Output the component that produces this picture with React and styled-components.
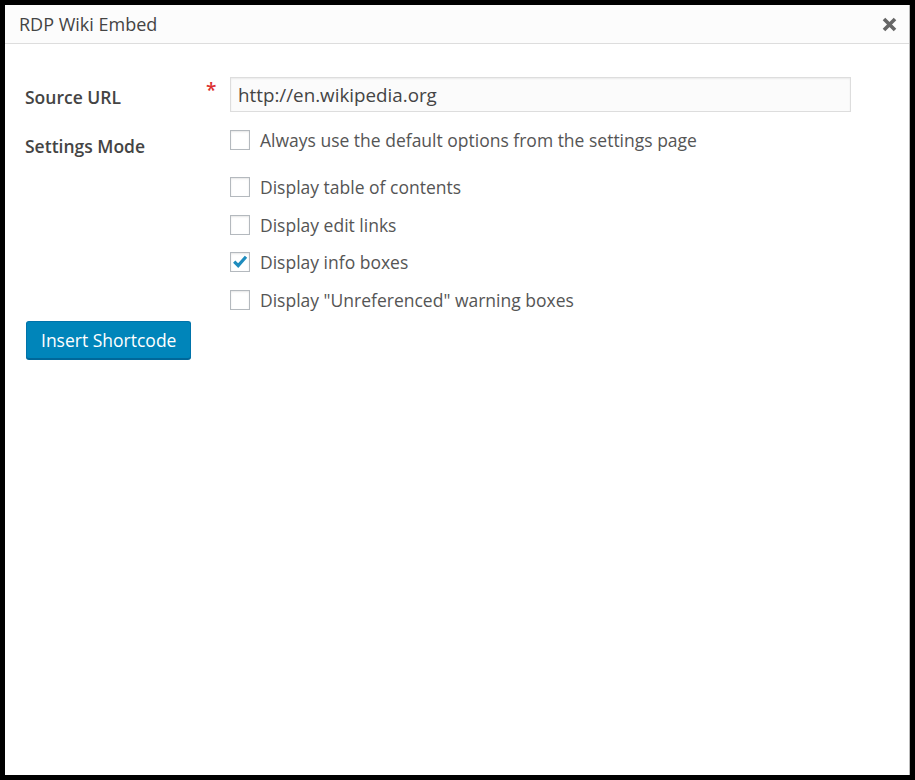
import React from 'react';
import styled, { createGlobalStyle } from 'styled-components';

const GlobalStyle = createGlobalStyle`
    html, body {
        margin: 0;
        padding: 0;
        background: #000;
    }
    body {
        font-family: "Open Sans", "Noto Sans", sans-serif;
        color: #444;
    }
`;

const Frame = styled.div`
    padding: 5px;
    height: 770px;
`;

const Dialog = styled.div`
    width: 904px;
    height: 770px;
    background: #fff;
    border-right: 1px solid #bbb;
    display: flex;
    flex-direction: column;
`;

const Header = styled.div`
    height: 38px;
    background: #fcfcfc;
    border-bottom: 1px solid #ddd;
    display: flex;
    align-items: center;
    justify-content: space-between;
    padding: 0 12px 0 14px;
`;

const Title = styled.h1`
    margin: 0;
    font-size: 18px;
    font-weight: 400;
    color: #444;
    line-height: 38px;
`;

const CloseButton = styled.button`
    border: 0;
    background: none;
    padding: 0;
    width: 16px;
    height: 16px;
    display: flex;
    align-items: center;
    justify-content: center;
    cursor: pointer;
`;

const Body = styled.div`
    padding: 33px 20px 0 20px;
`;

const Form = styled.div`
    display: grid;
    grid-template-columns: 180px 25px 621px;
    row-gap: 9px;
`;

const Label = styled.div`
    font-size: 17.5px;
    font-weight: 600;
    color: #444;
    line-height: 24px;
    padding-top: ${p => p.$top || 0}px;
`;

const Required = styled.span`
    color: #dc3232;
    font-size: 19px;
    font-weight: 600;
    line-height: 35px;
    padding-left: 1px;
    margin-top: -4px;
`;

const Input = styled.input`
    box-sizing: border-box;
    width: 621px;
    height: 35px;
    border: 1px solid #ddd;
    background: #fbfbfb;
    box-shadow: inset 0 1px 2px rgba(0, 0, 0, 0.07);
    font-family: "Open Sans", "Noto Sans", sans-serif;
    font-size: 18.8px;
    color: #444;
    padding: 0 7px;
    outline: none;
`;

const Options = styled.div`
    display: flex;
    flex-direction: column;
`;

const Group = styled.div`
    display: flex;
    flex-direction: column;
    margin-top: ${p => p.$gap || 0}px;
`;

const Option = styled.label`
    display: flex;
    align-items: center;
    gap: 10px;
    height: 37.5px;
    font-size: 17.5px;
    color: #555;
    cursor: pointer;
`;

const Box = styled.span`
    box-sizing: border-box;
    width: 20px;
    height: 20px;
    border: 1px solid #b4b9be;
    background: #fff;
    box-shadow: inset 0 1px 2px rgba(0, 0, 0, 0.1);
    display: flex;
    align-items: center;
    justify-content: center;
    flex-shrink: 0;
`;

const Actions = styled.div`
    display: flex;
`;

const Submit = styled.button`
    margin-top: 2px;
    margin-left: 1px;
    height: 38px;
    padding: 0 14px;
    background: #0085ba;
    border: 1px solid #0073aa;
    border-bottom-color: #006799;
    border-radius: 3px;
    box-shadow: 0 1px 0 #006799;
    color: #fff;
    font-family: "Open Sans", "Noto Sans", sans-serif;
    font-size: 17.5px;
    cursor: pointer;
`;

function Check({ checked, children }) {
    return (
        <Option>
            <Box>
                {checked && (
                    <svg width="18" height="18" viewBox="0 0 18 18">
                        <path d="M3.2 8.6 L7.2 12.6 L15 3.8" fill="none" stroke="#1e8cbe" strokeWidth="3.2" />
                    </svg>
                )}
            </Box>
            {children}
        </Option>
    );
}

export default function App() {
    return (
        <Frame>
            <GlobalStyle />
            <Dialog>
                <Header>
                    <Title>RDP Wiki Embed</Title>
                    <CloseButton aria-label="Close">
                        <svg width="15" height="15" viewBox="0 0 15 15">
                            <path d="M2 2 L13 13 M13 2 L2 13" stroke="#666" strokeWidth="3.6" />
                        </svg>
                    </CloseButton>
                </Header>
                <Body>
                    <Form>
                        <Label $top={8}>Source URL</Label>
                        <Required>*</Required>
                        <Input defaultValue="http://en.wikipedia.org" />

                        <Label $top={13}>Settings Mode</Label>
                        <span />
                        <Options>
                            <Group>
                                <Check>Always use the default options from the settings page</Check>
                            </Group>
                            <Group $gap={10}>
                                <Check>Display table of contents</Check>
                                <Check>Display edit links</Check>
                                <Check checked>Display info boxes</Check>
                                <Check>Display "Unreferenced" warning boxes</Check>
                            </Group>
                        </Options>
                    </Form>
                    <Actions>
                        <Submit>Insert Shortcode</Submit>
                    </Actions>
                </Body>
            </Dialog>
        </Frame>
    );
}
